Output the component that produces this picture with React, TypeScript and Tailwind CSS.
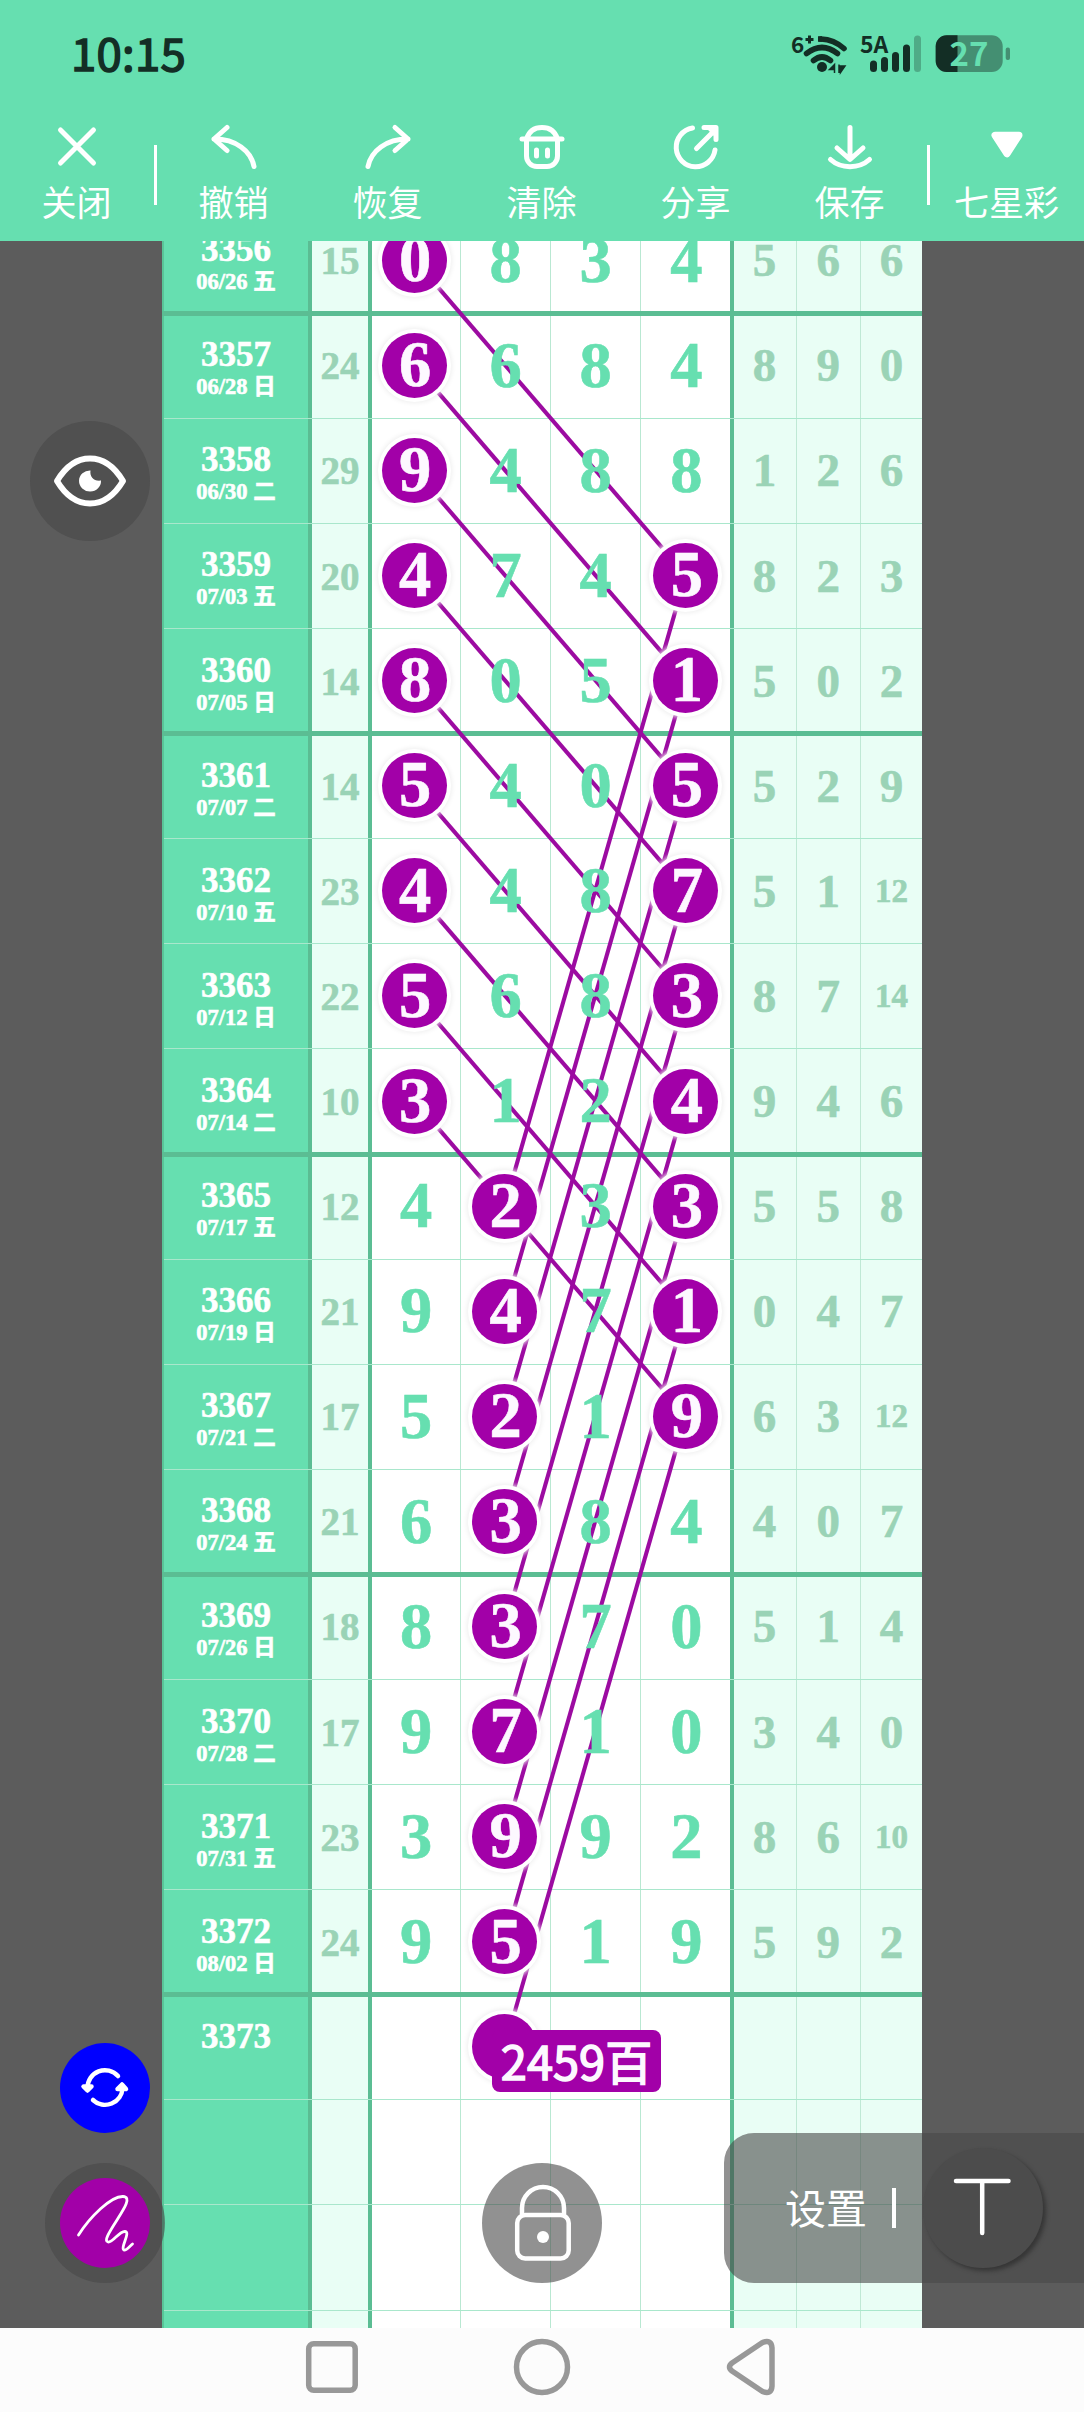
import React from 'react';

interface DrawRow {
  issue: string;
  date: string;
  sum: string;
  main: string[];
  rest: string[];
  /** Columns of the main numbers that carry a filled circle */
  marked: number[];
}

const ROW_HEIGHT = 105.1;
const COLUMN_CENTERS = [252.4, 342.8, 433.2, 523.7];
const CIRCLE_OFFSETS = ['mr-[4px]', 'mr-[2px]', 'mr-[2px]', 'mr-[1px]'];

const row = (issue: string, date: string, sum: string, main: string, rest: string, marked: number[]): DrawRow => ({
  issue,
  date,
  sum,
  main: main.split(' '),
  rest: rest.split(' '),
  marked,
});

const rows: DrawRow[] = [
  row('3356', '06/26 五', '15', '0 8 3 4', '5 6 6', [0]),
  row('3357', '06/28 日', '24', '6 6 8 4', '8 9 0', [0]),
  row('3358', '06/30 二', '29', '9 4 8 8', '1 2 6', [0]),
  row('3359', '07/03 五', '20', '4 7 4 5', '8 2 3', [0, 3]),
  row('3360', '07/05 日', '14', '8 0 5 1', '5 0 2', [0, 3]),
  row('3361', '07/07 二', '14', '5 4 0 5', '5 2 9', [0, 3]),
  row('3362', '07/10 五', '23', '4 4 8 7', '5 1 12', [0, 3]),
  row('3363', '07/12 日', '22', '5 6 8 3', '8 7 14', [0, 3]),
  row('3364', '07/14 二', '10', '3 1 2 4', '9 4 6', [0, 3]),
  row('3365', '07/17 五', '12', '4 2 3 3', '5 5 8', [1, 3]),
  row('3366', '07/19 日', '21', '9 4 7 1', '0 4 7', [1, 3]),
  row('3367', '07/21 二', '17', '5 2 1 9', '6 3 12', [1, 3]),
  row('3368', '07/24 五', '21', '6 3 8 4', '4 0 7', [1]),
  row('3369', '07/26 日', '18', '8 3 7 0', '5 1 4', [1]),
  row('3370', '07/28 二', '17', '9 7 1 0', '3 4 0', [1]),
  row('3371', '07/31 五', '23', '3 9 9 2', '8 6 10', [1]),
  row('3372', '08/02 日', '24', '9 5 1 9', '5 9 2', [1]),
  { issue: '3373', date: '', sum: '', main: ['', '', '', ''], rest: ['', '', ''], marked: [1] },
  { issue: '', date: '', sum: '', main: ['', '', '', ''], rest: ['', '', ''], marked: [] },
  { issue: '', date: '', sum: '', main: ['', '', '', ''], rest: ['', '', ''], marked: [] },
  { issue: '', date: '', sum: '', main: ['', '', '', ''], rest: ['', '', ''], marked: [] },
];

// Every chain runs first column -> fourth column (3 rows down) -> second column (6 rows down)
const chains = [0, 1, 2, 3, 4, 5, 6, 7, 8];

const rowCenter = (index: number) => index * ROW_HEIGHT + 51.8;

const StatusBar: React.FC = () => (
  <div className="flex h-[108px] items-center pl-[71px] pr-[74px] font-['Noto_Sans_CJK_SC',sans-serif] text-[#132e25]">
    <span className="pb-[5px] text-[45.500px] leading-none tracking-[0.3px] [-webkit-text-stroke:1.500px_currentColor]">
      10:15
    </span>
    <svg className="ml-auto" width="220" height="90" viewBox="790 9 220 90">
      <text x="791" y="53" fontSize="22.500" fontWeight="700" fill="#132e25">6</text>
      <path d="M809.5 35.5v8M805.5 39.5h8" stroke="#132e25" strokeWidth="3" />
      <g fill="none" stroke="#132e25" strokeWidth="5.6" strokeLinecap="round">
        <path d="M821 39Q834 39.5 844 48.5" />
        <path d="M818 36.2v5.6h4v-5.6z" strokeWidth="0" fill="#132e25" />
        <path d="M806.500 53.5Q822 41.500 837.500 53.5" />
        <path d="M813.5 60.500Q822 53.500 830.5 60.500" />
      </g>
      <circle cx="822" cy="67" r="5" fill="#132e25" />
      <path d="M834.500 64.500v8.500M829.5 69.500l5-5v5zM839 64.500v8.500M840.500 72.500l4.500-6.500h-4.500z" fill="#132e25" stroke="#132e25" strokeWidth="1.500" />
      <text x="860" y="53" fontSize="23" fontWeight="700" fill="#132e25">5A</text>
      <g fill="#132e25">
        <rect x="870" y="60.5" width="7" height="11.5" rx="3.5" />
        <rect x="881" y="57" width="7" height="15" rx="3.5" />
        <rect x="892" y="52" width="7" height="20" rx="3.5" />
        <rect x="903" y="44.5" width="7" height="27.5" rx="3.5" />
        <rect x="914" y="35.5" width="7" height="36.5" rx="3.5" fill="#4fab87" />
      </g>
      <rect x="935.7" y="35.3" width="67" height="36.7" rx="11" fill="#448f72" />
      <path d="M957.5 35.3h-10.8a11 11 0 0 0-11 11v14.7a11 11 0 0 0 11 11h10.8z" fill="#132e25" />
      <rect x="1005.7" y="47.5" width="4.3" height="12.5" rx="2" fill="#448f72" />
      <text x="949.5" y="66" fontSize="33" fontWeight="700" fill="#66dfb0">27</text>
    </svg>
  </div>
);

interface ToolProps {
  label: string;
  children: React.ReactNode;
}

const Tool: React.FC<ToolProps> = ({ label, children }) => (
  <button className="flex w-[154px] flex-col items-center text-white">
    <svg
      width="50"
      height="50"
      viewBox="0 0 50 50"
      fill="none"
      stroke="currentColor"
      strokeWidth="5"
      strokeLinecap="round"
      strokeLinejoin="round"
    >
      {children}
    </svg>
    <span className="mt-[11px] mr-[1px] whitespace-nowrap text-[35px] leading-[36px]">{label}</span>
  </button>
);

const Toolbar: React.FC = () => (
  <div className="flex h-[133px] items-start pt-[14px] font-['Noto_Sans_CJK_SC',sans-serif]">
    <Tool label="关闭">
      <path d="M8.5 8l33 33M41.5 8l-33 33" />
    </Tool>
    <div className="mt-[23px] h-[60px] w-[3px] bg-white" />
    <Tool label="撤销">
      <path d="M18 5.5L5 17l13 11.5M5 17C27 17 42 29 45 44.5" />
    </Tool>
    <Tool label="恢复">
      <path d="M32 5.5L45 17 32 28.5M45 17C23 17 8 29 5 44.5" />
    </Tool>
    <Tool label="清除">
      <path d="M5 17h40" />
      <path d="M9.500 17C12 9 18 5.500 25 5.500S38 9 40.500 17V34a10.500 10.500 0 0 1-10.500 10.500H20A10.500 10.500 0 0 1 9.500 34z" />
      <path d="M19.500 28v6M30.500 28v6" />
    </Tool>
    <Tool label="分享">
      <path d="M21.500 6A19.500 19.500 0 1 0 44 28" />
      <path d="M25.500 26.500L44 8M33 5.500h12v12" />
      <path d="M36 5.500h9v9z" fill="currentColor" strokeWidth="2" />
    </Tool>
    <Tool label="保存">
      <path d="M25 5.500V34M12 26l13 11.500L38 26M5.500 37.500C16 47 34 47 44.500 37.500" />
    </Tool>
    <div className="mt-[23px] h-[60px] w-[3px] bg-white" />
    <Tool label="七星彩">
      <path d="M13 13.500h24L25 32z" fill="currentColor" strokeWidth="7" transform="translate(0 -.2)" />
    </Tool>
  </div>
);

interface MainCellProps {
  value: string;
  marked: boolean;
  column: number;
}

const MainCell: React.FC<MainCellProps> = ({ value, marked, column }) => (
  <div
    className={`flex items-center justify-center bg-white ${
      column === 3 ? 'border-r-4 border-r-[#5bbd93] pl-[2px]' : 'border-r border-r-[#b9e8d2]'
    }`}
  >
    {marked ? (
      <span
        className={`relative z-10 mb-[1px] flex size-[65px] shrink-0 items-center justify-center rounded-full bg-[#a200a8] pl-[2px] text-[#fdf8ff] shadow-[0_0_0_4px_#fff,0_0_5px_5px_#eeeeee] ${CIRCLE_OFFSETS[column]}`}
      >
        {value}
      </span>
    ) : (
      <span className="relative z-10">{value}</span>
    )}
  </div>
);

const TableRow: React.FC<{ data: DrawRow; index: number }> = ({ data, index }) => (
  <div
    className={`relative grid h-[105.1px] grid-cols-[150px_60px_89px_90px_90px_92.500px_63px_64.500px_61px] ${
      index % 4 === 0
        ? "after:absolute after:inset-x-0 after:-bottom-[2.500px] after:z-[1] after:h-[5px] after:bg-[#5bbd93] after:content-['']"
        : "after:absolute after:left-[2px] after:right-0 after:-bottom-[0.500px] after:z-[1] after:h-px after:bg-[#a9e7cc] after:content-['']"
    }`}
  >
    <div className="flex flex-col items-center border-r-4 border-l-2 border-r-[#5bbd93] border-l-[#59c598] bg-[#66dfb0] pt-[23px] text-white">
      <span className="text-[35px] leading-[38px]">{data.issue}</span>
      <span className="text-[22.500px] leading-[26px]">{data.date}</span>
    </div>
    <div className="flex items-center justify-center border-r-4 border-r-[#5bbd93] bg-[#e9fef5] text-[39px] text-[#9ad3b6]">
      {data.sum}
    </div>
    {data.main.map((value, i) => (
      <MainCell key={i} value={value} marked={data.marked.includes(i)} column={i} />
    ))}
    {data.rest.map((value, i) => (
      <div
        key={i}
        className={`flex items-center justify-center bg-[#e9fef5] text-[#9ad3b6] ${
          value.length > 1 ? 'text-[33px]' : 'text-[47px]'
        } ${i < 2 ? 'border-r border-r-[#bfe9d5]' : ''}`}
      >
        {value}
      </div>
    ))}
  </div>
);

const TrendTable: React.FC = () => (
  <div className="relative -mt-[32.800px] ml-[162px] w-[760px] font-['Liberation_Serif','Noto_Sans_CJK_SC',serif] text-[64.500px] font-bold leading-none text-[#66dfb0] [-webkit-text-stroke:0.6px_currentColor]">
    {rows.map((data, i) => (
      <TableRow key={i} data={data} index={i} />
    ))}
    <svg className="absolute left-0 top-0 z-[2]" width="760" height="2110" fill="none" stroke="#9c0ba1" strokeWidth="4.100">
      {chains.map((start) => (
        <g key={start}>
          <line
            x1={COLUMN_CENTERS[0]}
            y1={rowCenter(start)}
            x2={COLUMN_CENTERS[3]}
            y2={rowCenter(start + 3)}
          />
          <line
            x1={COLUMN_CENTERS[3]}
            y1={rowCenter(start + 3)}
            x2={COLUMN_CENTERS[1]}
            y2={rowCenter(start + 9)}
          />
        </g>
      ))}
    </svg>
    <div className="absolute left-[330px] top-[1822px] z-20 flex h-[62px] w-[169px] items-center justify-center rounded-[8px] bg-[#a200a8] pb-[4px] font-['Noto_Sans_CJK_SC',sans-serif] text-[47px] font-normal text-[#fdf8ff] [-webkit-text-stroke:1.500px_currentColor]">
      2459百
    </div>
  </div>
);

const FloatingTools: React.FC = () => (
  <div className="absolute inset-0 z-30">
    <div className="absolute left-[30px] top-[180px] flex size-[120px] items-center justify-center rounded-full bg-[#484848]/60">
      <svg width="76" height="56" viewBox="0 0 76 56" fill="none">
        <path
          d="M5 28C14 13 26 5.500 38 5.500S62 13 71 28C62 43 50 50.500 38 50.500S14 43 5 28z"
          stroke="#fff"
          strokeWidth="6"
          strokeLinejoin="round"
        />
        <path d="M38.500 17.500C37.500 24 42 28.500 49 27.500A11 10.500 0 1 1 38.500 17.500z" fill="#fff" />
      </svg>
    </div>

    <div className="absolute left-[60px] top-[1802px] flex size-[90px] items-center justify-center rounded-full bg-[#0000ff]">
      <svg width="50" height="42" viewBox="0 0 50 42" fill="none" stroke="#fff" strokeWidth="4.500" strokeLinecap="round" strokeLinejoin="round">
        <path d="M38 9A17.500 17.500 0 0 0 7.500 21M13 33A17.500 17.500 0 0 0 42.500 21" />
        <path d="M3.500 19.500h8l-4 4z" fill="#fff" />
        <path d="M46 22h-8.500l4.500-4.500z" fill="#fff" />
      </svg>
    </div>

    <div className="absolute left-[45px] top-[1922px] flex size-[120px] items-center justify-center rounded-full bg-[#484848]/60">
      <div className="flex size-[90px] items-center justify-center rounded-full bg-[#a200a8]">
        <svg width="90" height="90" viewBox="0 0 90 90" fill="none" stroke="#fff" strokeWidth="2.800" strokeLinecap="round">
          <path d="M18.500 57C30 39 51 18 63 18.500C72 19 64 31 57 42C48 56 44 63 48 64C53 65 59 53 65 53.500C71 54 60 70 64 72C66 73 69 69 72.500 66" />
        </svg>
      </div>
    </div>

    <div className="absolute left-[482px] top-[1922px] flex size-[120px] items-center justify-center rounded-full bg-[#484848]/60">
      <svg width="60" height="78" viewBox="0 0 60 78" fill="none" stroke="#fff" strokeWidth="4.500">
        <path d="M10 31V24a21 21 0 0 1 42 0v7" />
        <rect x="5.200" y="31" width="51.500" height="43.500" rx="8" />
        <circle cx="31" cy="53" r="6" fill="#fff" stroke="none" />
      </svg>
    </div>

    <div className="absolute right-0 top-[1892px] flex h-[150px] w-[360px] items-center rounded-l-[30px] bg-[#484848]/60 pl-[61px] font-['Noto_Sans_CJK_SC',sans-serif] text-[41px] text-white">
      <span className="pb-[3px] leading-none">设置</span>
      <div className="ml-[25px] h-[40px] w-[4px] bg-white" />
      <div className="ml-[27px] flex size-[120px] items-center justify-center rounded-full bg-[#4c4c4c] shadow-[3px_3px_4px_#363636]">
        <svg width="60" height="60" viewBox="0 0 60 60" stroke="#fff" strokeWidth="4.500" strokeLinecap="round">
          <path d="M3 3h52.500M29.200 3v52" />
        </svg>
      </div>
    </div>
  </div>
);

const NavigationBar: React.FC = () => (
  <div className="flex h-[84px] items-start bg-[#fcfcfc] pt-[8px] pl-[302px]">
    <svg width="480" height="62" viewBox="0 0 480 62" fill="none" stroke="#989898" strokeWidth="5.500" strokeLinejoin="round">
      <rect x="6.700" y="7.700" width="46.500" height="46.500" rx="5" />
      <circle cx="240" cy="31" r="25.500" />
      <path d="M460.500 6.500L430 27Q425 31 430 35L460.500 55.500Q469.500 59 470 50V12Q469.500 3 460.500 6.500z" />
    </svg>
  </div>
);

const App: React.FC = () => {
  return (
    <div className="flex h-[2412px] w-[1084px] flex-col overflow-hidden bg-[#5c5c5c]">
      <header className="h-[241px] shrink-0 bg-[#66dfb0]">
        <StatusBar />
        <Toolbar />
      </header>
      <main className="relative h-[2087px] shrink-0 overflow-hidden">
        <TrendTable />
        <FloatingTools />
      </main>
      <NavigationBar />
    </div>
  );
};

export default App;
